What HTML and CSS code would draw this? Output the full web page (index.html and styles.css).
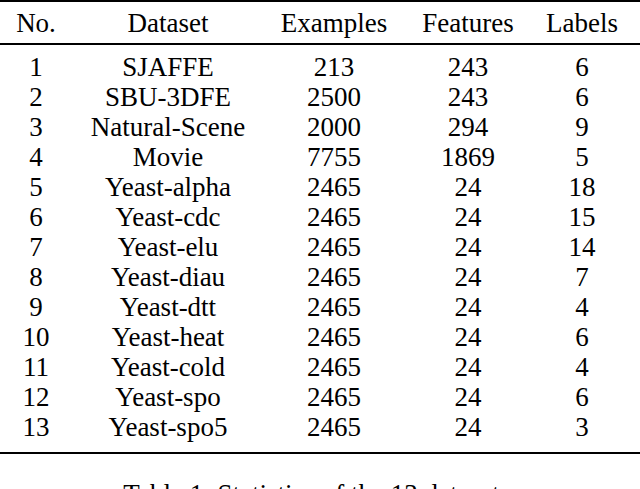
FILE: index.html
```html
<!DOCTYPE html>
<html>
<head>
<meta charset="utf-8">
<link rel="stylesheet" href="styles.css">
</head>
<body>
<div class="rule rule-top"></div>
<table class="stats">
  <colgroup>
    <col class="c-no"><col class="c-ds"><col class="c-ex"><col class="c-fe"><col class="c-la">
  </colgroup>
  <thead>
    <tr><th>No.</th><th>Dataset</th><th>Examples</th><th>Features</th><th class="last">Labels</th></tr>
  </thead>
  <tbody>
    <tr class="first"><td>1</td><td>SJAFFE</td><td>213</td><td>243</td><td class="last">6</td></tr>
    <tr><td>2</td><td>SBU-3DFE</td><td>2500</td><td>243</td><td class="last">6</td></tr>
    <tr><td>3</td><td>Natural-Scene</td><td>2000</td><td>294</td><td class="last">9</td></tr>
    <tr><td>4</td><td>Movie</td><td>7755</td><td>1869</td><td class="last">5</td></tr>
    <tr><td>5</td><td>Yeast-alpha</td><td>2465</td><td>24</td><td class="last">18</td></tr>
    <tr><td>6</td><td>Yeast-cdc</td><td>2465</td><td>24</td><td class="last">15</td></tr>
    <tr><td>7</td><td>Yeast-elu</td><td>2465</td><td>24</td><td class="last">14</td></tr>
    <tr><td>8</td><td>Yeast-diau</td><td>2465</td><td>24</td><td class="last">7</td></tr>
    <tr><td>9</td><td>Yeast-dtt</td><td>2465</td><td>24</td><td class="last">4</td></tr>
    <tr><td>10</td><td>Yeast-heat</td><td>2465</td><td>24</td><td class="last">6</td></tr>
    <tr><td>11</td><td>Yeast-cold</td><td>2465</td><td>24</td><td class="last">4</td></tr>
    <tr><td>12</td><td>Yeast-spo</td><td>2465</td><td>24</td><td class="last">6</td></tr>
    <tr class="end"><td>13</td><td>Yeast-spo5</td><td>2465</td><td>24</td><td class="last">3</td></tr>
  </tbody>
</table>
<p class="caption">Table 1: Statistics of the 13 datasets.</p>
</body>
</html>
```
FILE: styles.css
```css
html, body {
  margin: 0;
  padding: 0;
  background: #fff;
}
body {
  font-family: "Liberation Serif", "Times New Roman", serif;
  font-size: 27px;
  color: #000;
  overflow: hidden;
}
.rule {
  height: 2px;
  background: #000;
}
.stats {
  width: 640px;
  table-layout: fixed;
  border-collapse: separate;
  border-spacing: 0;
}
.c-no { width: 72px; }
.c-ds { width: 192px; }
.c-ex { width: 140px; }
.c-fe { width: 128px; }
.c-la { width: 108px; }
.stats th, .stats td {
  font-weight: normal;
  text-align: center;
  line-height: 30px;
  padding: 0;
  white-space: nowrap;
}
.stats th.last, .stats td.last {
  padding-right: 8px;
}
.stats th {
  border-bottom: 2px solid #000;
  padding-top: 6px;
  padding-bottom: 5px;
}
.stats tr.first td {
  padding-top: 7px;
}
.stats tr.end td {
  padding-bottom: 10px;
  border-bottom: 2px solid #000;
}
.caption {
  margin: 25px 0 0;
  line-height: 30px;
  text-align: center;
}
```
